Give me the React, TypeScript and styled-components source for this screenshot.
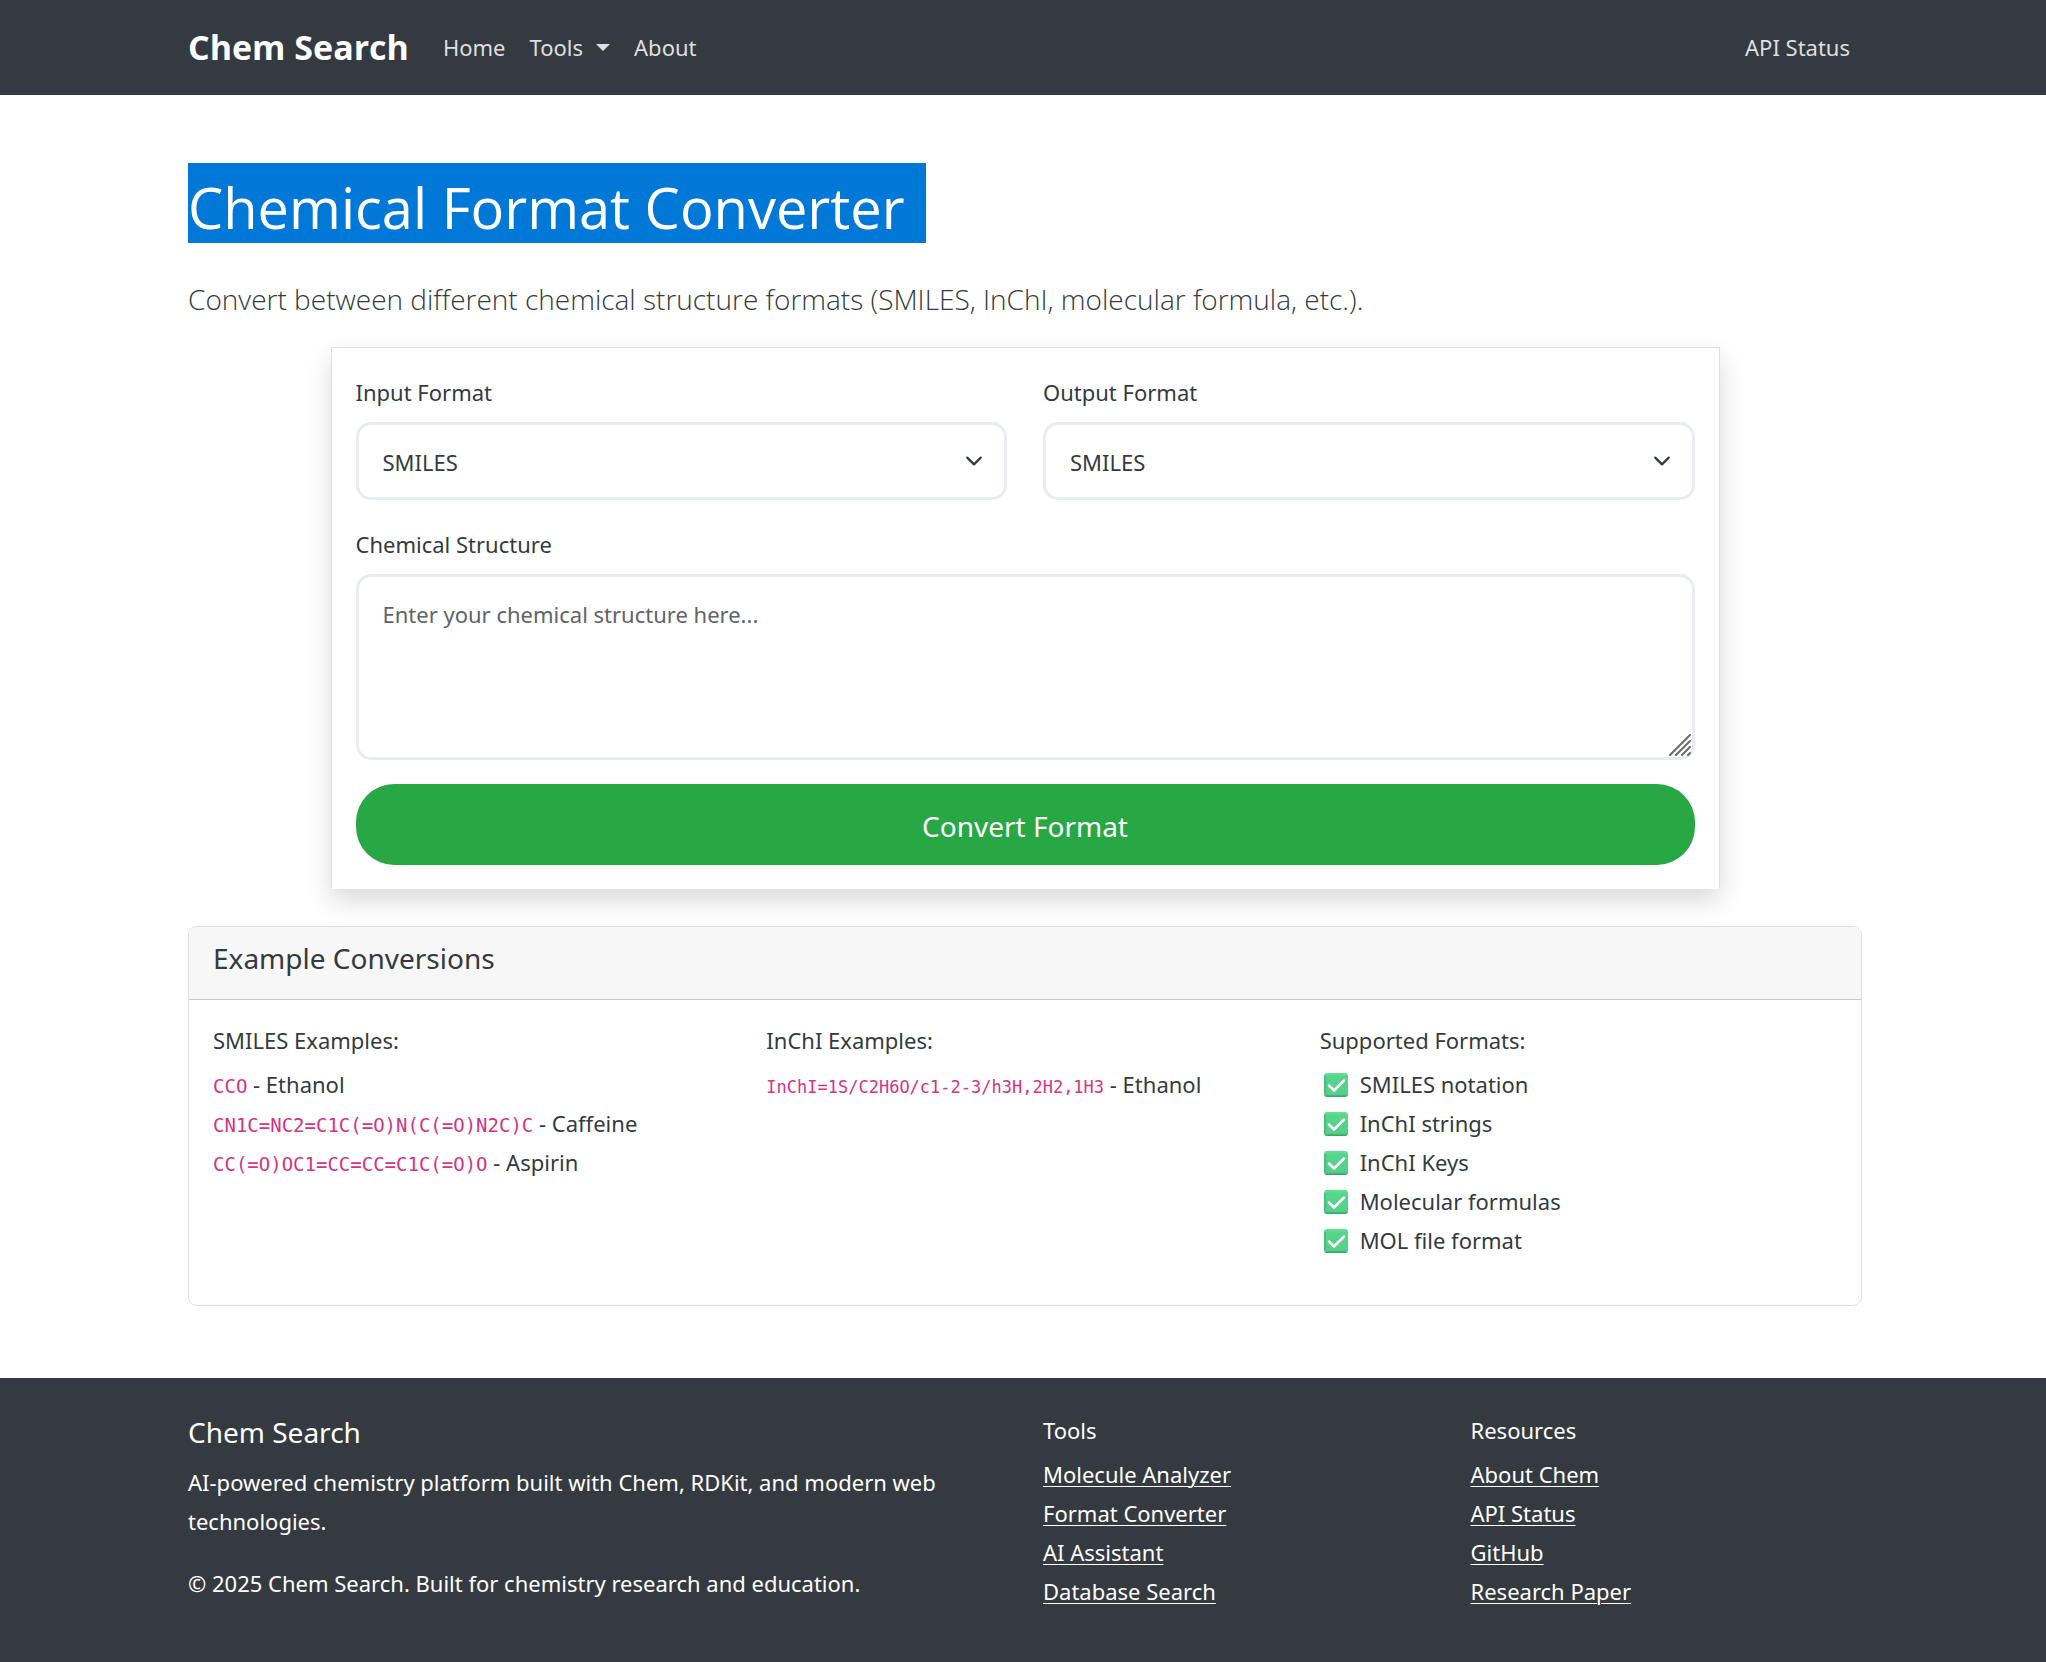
import React from "react";
import styled, { createGlobalStyle } from "styled-components";

const dark = "#343a40";
const sans = '"Noto Sans", "Open Sans", sans-serif';
const display = '"Open Sans", "Noto Sans", sans-serif';

const GlobalStyle = createGlobalStyle`
  *, *::before, *::after { box-sizing: border-box; }
  body {
    margin: 0;
    background: #fff;
    color: ${dark};
    font-family: ${sans};
    font-size: 22px;
    line-height: 39px;
  }
  h1, h2, h3, p, ul { margin: 0; padding: 0; font-weight: 400; }
  ul { list-style: none; }
  button, select, textarea { font: inherit; color: inherit; }
`;

const Page = styled.div`
  display: flex;
  flex-direction: column;
  min-height: 100vh;
`;

const Container = styled.div`
  width: 100%;
  max-width: 1710px;
  margin: 0 auto;
  padding: 0 16px 0 20px;
`;

const Navbar = styled.header`
  background: ${dark};
`;

const NavRow = styled(Container)`
  display: flex;
  align-items: center;
  min-height: 95px;
`;

const Brand = styled.a`
  margin-right: 22px;
  color: #fff;
  font-family: ${display};
  font-size: 34px;
  font-weight: 700;
  text-decoration: none;
`;

const NavLinks = styled.nav`
  display: flex;
  flex: 1;
`;

const NavLink = styled.a<{ $end?: boolean }>`
  display: flex;
  align-items: center;
  gap: 13px;
  margin-left: ${(p) => (p.$end ? "auto" : "0")};
  padding: 0 12px;
  color: rgba(255, 255, 255, 0.85);
  text-decoration: none;
`;

const Caret = styled.span`
  border-top: 7px solid currentColor;
  border-left: 7px solid transparent;
  border-right: 7px solid transparent;
`;

const Main = styled.main`
  padding: 68px 0 72px;
`;

const Title = styled.h1`
  margin-bottom: 32px;
  font-family: ${display};
  font-size: 56px;
  line-height: 72px;
`;

const Selected = styled.span`
  display: inline-block;
  padding: 8px 21px 0 0;
  background: #0078d7;
  color: #fff;
  vertical-align: top;
`;

const Lead = styled.p`
  margin-bottom: 24px;
  font-family: ${display};
  font-size: 28px;
  font-weight: 300;
  line-height: 48px;
`;

const Columns = styled.div`
  display: grid;
  grid-template-columns: repeat(12, 1fr);
  column-gap: 36px;
`;

const FormCard = styled.form`
  grid-column: 2 / span 10;
  padding: 24px 24px 23px;
  border: 1px solid #dfdfdf;
  border-bottom-color: #fff;
  background: #fff;
  box-shadow: 0 12px 24px rgba(0, 0, 0, 0.15);
`;

const SelectRow = styled.div`
  display: grid;
  grid-template-columns: 1fr 1fr;
  column-gap: 36px;
`;

const Field = styled.div`
  margin-bottom: 24px;
`;

const Label = styled.label`
  display: block;
  margin-bottom: 10px;
  line-height: 40px;
`;

const ControlWrap = styled.div`
  position: relative;
  display: flex;
`;

const Select = styled.select`
  width: 100%;
  height: 78px;
  padding: 2px 60px 0 24px;
  border: 3px solid #e9ecef;
  border-radius: 15px;
  background: #fff;
  appearance: none;
`;

const Chevron = styled.svg`
  position: absolute;
  top: 30px;
  right: 24px;
  width: 18px;
  height: 18px;
  pointer-events: none;
`;

const TextArea = styled.textarea`
  width: 100%;
  padding: 19px 24px 17px;
  border: 3px solid #e9ecef;
  border-radius: 15px;
  background: #fff;
  line-height: 36px;
  resize: vertical;
  &::placeholder { color: #5f6469; opacity: 1; }
  &::-webkit-resizer { background: transparent; }
`;

const Grip = styled.svg`
  position: absolute;
  right: 4px;
  bottom: 4px;
  width: 22px;
  height: 22px;
  pointer-events: none;
`;

const Submit = styled.button`
  display: block;
  width: 100%;
  height: 81px;
  padding: 3px 24px 0;
  border: 0;
  border-radius: 38px;
  background: #28a745;
  color: #fff;
  font-size: 28px;
`;

const Card = styled.section`
  margin-top: 37px;
  border: 1px solid #dfdfdf;
  border-radius: 9px;
  background: #fff;
  overflow: hidden;
`;

const CardHeader = styled.div`
  padding: 13px 24px 23px;
  border-bottom: 1px solid #c8c8c8;
  background: #f7f7f7;
`;

const Heading = styled.h2`
  font-size: 28px;
  line-height: 36px;
`;

const CardBody = styled.div`
  display: grid;
  grid-template-columns: repeat(3, 1fr);
  column-gap: 36px;
  padding: 24px 24px 45px;
`;

const Subheading = styled.h3`
  margin-bottom: 9px;
  font-size: 22px;
  line-height: 32px;
`;

const Code = styled.code<{ $small?: boolean }>`
  color: #d63384;
  font-family: "DejaVu Sans Mono", monospace;
  font-size: ${(p) => (p.$small ? 17 : 19)}px;
  line-height: 1;
`;

const CheckItem = styled.li`
  display: flex;
  align-items: center;
  gap: 12px;
  padding-left: 4px;
`;

const Footer = styled.footer`
  flex: 1;
  padding: 36px 0 48px;
  background: ${dark};
  color: #fff;
`;

const FooterGrid = styled(Container)`
  display: grid;
  grid-template-columns: repeat(4, 1fr);
  column-gap: 36px;
`;

const About = styled.div`
  grid-column: span 2;
  display: flex;
  flex-direction: column;
`;

const Blurb = styled.p`
  margin: 13px 0 23px;
`;

const FooterLink = styled.a`
  color: #fff;
  text-decoration-thickness: 1px;
  text-underline-offset: 3px;
`;

const CheckIcon = () => (
  <svg width="24" height="24" viewBox="0 0 24 24" aria-hidden="true">
    <defs>
      <linearGradient id="check-face" x1="0" y1="0" x2="0" y2="1">
        <stop offset="0" stopColor="#62e295" />
        <stop offset="0.15" stopColor="#56d58c" />
        <stop offset="0.88" stopColor="#56d08a" />
        <stop offset="1" stopColor="#38996a" />
      </linearGradient>
    </defs>
    <rect width="24" height="24" rx="3" fill="url(#check-face)" />
    <path d="M1 3v18" stroke="#43a574" strokeWidth="1" />
    <path d="M5 12.5l5 5L20 7.500" fill="none" stroke="#fff" strokeWidth="2.500" strokeLinecap="round" strokeLinejoin="round" />
  </svg>
);

const FORMATS = ["SMILES", "InChI", "InChI Key", "Molecular Formula", "MOL"];

const FormatSelect = ({ id, label }: { id: string; label: string }) => (
  <Field>
    <Label htmlFor={id}>{label}</Label>
    <ControlWrap>
      <Select id={id} defaultValue="SMILES">
        {FORMATS.map((f) => (
          <option key={f}>{f}</option>
        ))}
      </Select>
      <Chevron viewBox="0 0 16 16" aria-hidden="true">
        <path d="m2 5 6 6 6-6" fill="none" stroke={dark} strokeWidth="2" strokeLinecap="round" strokeLinejoin="round" />
      </Chevron>
    </ControlWrap>
  </Field>
);

const SMILES = [
  ["CCO", "Ethanol"],
  ["CN1C=NC2=C1C(=O)N(C(=O)N2C)C", "Caffeine"],
  ["CC(=O)OC1=CC=CC=C1C(=O)O", "Aspirin"],
];

const SUPPORTED = ["SMILES notation", "InChI strings", "InChI Keys", "Molecular formulas", "MOL file format"];

const FOOTER_LINKS = [
  { title: "Tools", links: ["Molecule Analyzer", "Format Converter", "AI Assistant", "Database Search"] },
  { title: "Resources", links: ["About Chem", "API Status", "GitHub", "Research Paper"] },
];

export default function App() {
  return (
    <Page>
      <GlobalStyle />
      <Navbar>
        <NavRow>
          <Brand href="#">Chem Search</Brand>
          <NavLinks>
            <NavLink href="#">Home</NavLink>
            <NavLink href="#">
              Tools <Caret />
            </NavLink>
            <NavLink href="#">About</NavLink>
            <NavLink href="#" $end>
              API Status
            </NavLink>
          </NavLinks>
        </NavRow>
      </Navbar>

      <Main>
        <Container>
          <Title>
            <Selected>Chemical Format Converter</Selected>
          </Title>
          <Lead>Convert between different chemical structure formats (SMILES, InChI, molecular formula, etc.).</Lead>

          <Columns>
            <FormCard onSubmit={(e) => e.preventDefault()}>
              <SelectRow>
                <FormatSelect id="input-format" label="Input Format" />
                <FormatSelect id="output-format" label="Output Format" />
              </SelectRow>
              <Field>
                <Label htmlFor="structure">Chemical Structure</Label>
                <ControlWrap>
                  <TextArea id="structure" rows={4} placeholder="Enter your chemical structure here..." />
                  <Grip viewBox="0 0 22 22" aria-hidden="true">
                    <path d="M1 21L21 1M7 21L21 7M13 21l8-8M19 21l2-2" stroke="#6b6b6b" strokeWidth="2" strokeLinecap="round" />
                  </Grip>
                </ControlWrap>
              </Field>
              <Submit type="submit">Convert Format</Submit>
            </FormCard>
          </Columns>

          <Card>
            <CardHeader>
              <Heading>Example Conversions</Heading>
            </CardHeader>
            <CardBody>
              <div>
                <Subheading>SMILES Examples:</Subheading>
                <ul>
                  {SMILES.map(([code, name]) => (
                    <li key={name}>
                      <Code>{code}</Code> - {name}
                    </li>
                  ))}
                </ul>
              </div>
              <div>
                <Subheading>InChI Examples:</Subheading>
                <ul>
                  <li>
                    <Code $small>InChI=1S/C2H6O/c1-2-3/h3H,2H2,1H3</Code> - Ethanol
                  </li>
                </ul>
              </div>
              <div>
                <Subheading>Supported Formats:</Subheading>
                <ul>
                  {SUPPORTED.map((name) => (
                    <CheckItem key={name}>
                      <CheckIcon />
                      {name}
                    </CheckItem>
                  ))}
                </ul>
              </div>
            </CardBody>
          </Card>
        </Container>
      </Main>

      <Footer>
        <FooterGrid>
          <About>
            <Heading>Chem Search</Heading>
            <Blurb>AI-powered chemistry platform built with Chem, RDKit, and modern web technologies.</Blurb>
            <p>© 2025 Chem Search. Built for chemistry research and education.</p>
          </About>
          {FOOTER_LINKS.map((group) => (
            <div key={group.title}>
              <Subheading>{group.title}</Subheading>
              <ul>
                {group.links.map((link) => (
                  <li key={link}>
                    <FooterLink href="#">{link}</FooterLink>
                  </li>
                ))}
              </ul>
            </div>
          ))}
        </FooterGrid>
      </Footer>
    </Page>
  );
}
